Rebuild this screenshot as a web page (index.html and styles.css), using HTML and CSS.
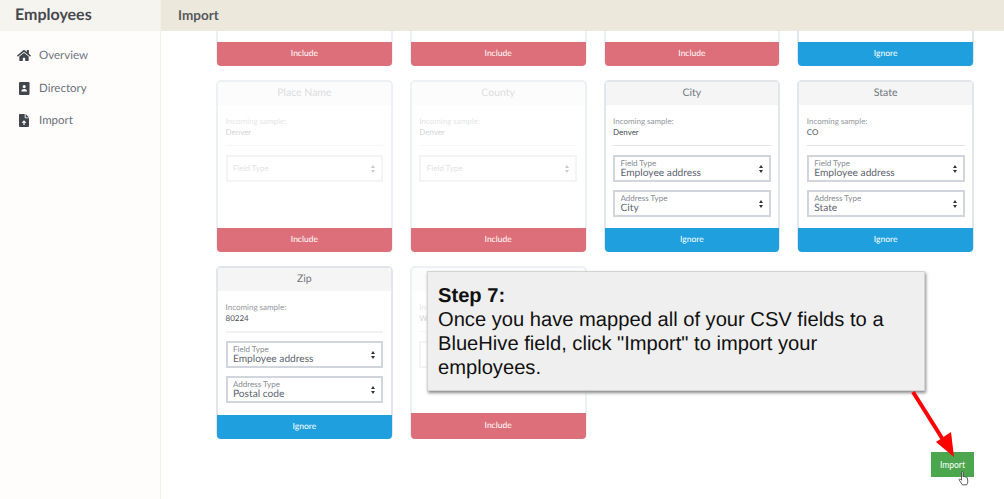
FILE: index.html
```html
<!DOCTYPE html>
<html lang="en">
<head>
<meta charset="utf-8">
<title>Import</title>
<link rel="stylesheet" href="styles.css">
</head>
<body>
<div class="app">
  <aside class="sidebar">
    <div class="brand">Employees</div>
    <nav class="nav">
      <a class="nav-item"><svg class="nav-icon" viewBox="0 0 576 512"><path d="M280.37 148.26L96 300.11V464a16 16 0 0 0 16 16l112.06-.29a16 16 0 0 0 15.92-16V368a16 16 0 0 1 16-16h64a16 16 0 0 1 16 16v95.64a16 16 0 0 0 16 16.05L464 480a16 16 0 0 0 16-16V300L295.67 148.26a12.19 12.19 0 0 0-15.3 0zM571.6 251.47L488 182.56V44.05a12 12 0 0 0-12-12h-56a12 12 0 0 0-12 12v72.61L318.47 43a48 48 0 0 0-61 0L4.34 251.47a12 12 0 0 0-1.6 16.9l25.5 31A12 12 0 0 0 45.15 301l235.22-193.74a12.19 12.19 0 0 1 15.3 0L530.9 301a12 12 0 0 0 16.9-1.6l25.5-31a12 12 0 0 0-1.7-16.93z"/></svg>Overview</a>
      <a class="nav-item"><svg class="nav-icon" viewBox="0 0 12 13"><path fill-rule="evenodd" d="M2 0h8.500a1 1 0 0 1 1 1v11a1 1 0 0 1-1 1H2a1 1 0 0 1-1-1V1a1 1 0 0 1 1-1zM6.200 3a1.600 1.600 0 1 0 0 3.200a1.600 1.600 0 0 0 0-3.200zM3.400 9.600h5.600c.2-1.500-.9-2.600-2.800-2.600s-3 1.100-2.800 2.600z"/></svg>Directory</a>
      <a class="nav-item"><svg class="nav-icon" viewBox="0 0 12 13"><path fill-rule="evenodd" d="M2 0h4.700v3.600a.7.7 0 0 0 .7.7H11V12a1 1 0 0 1-1 1H2a1 1 0 0 1-1-1V1a1 1 0 0 1 1-1zM7.600 0l3.400 3.400H7.600zM5.400 11h1.300V8.800h1.800L6 6.200 3.500 8.800h1.900z"/></svg>Import</a>
    </nav>
  </aside>
  <div class="page">
    <header class="topbar">Import</header>
    <main class="content">
      <div class="grid">
        <section class="card stub off"><div class="card-body"></div><div class="action include">Include</div></section>
        <section class="card stub off"><div class="card-body"></div><div class="action include">Include</div></section>
        <section class="card stub off"><div class="card-body"></div><div class="action include">Include</div></section>
        <section class="card stub"><div class="card-body"></div><div class="action ignore">Ignore</div></section>

        <section class="card off">
          <h3 class="card-title">Place Name</h3>
          <div class="card-body">
            <div class="sample-label">Incoming sample:</div>
            <div class="sample-value">Denver</div>
            <hr class="rule">
            <div class="select"><span class="select-label">Field Type</span><span class="arrows"></span></div>
          </div>
          <div class="action include">Include</div>
        </section>
        <section class="card off">
          <h3 class="card-title">County</h3>
          <div class="card-body">
            <div class="sample-label">Incoming sample:</div>
            <div class="sample-value">Denver</div>
            <hr class="rule">
            <div class="select"><span class="select-label">Field Type</span><span class="arrows"></span></div>
          </div>
          <div class="action include">Include</div>
        </section>
        <section class="card">
          <h3 class="card-title">City</h3>
          <div class="card-body">
            <div class="sample-label">Incoming sample:</div>
            <div class="sample-value">Denver</div>
            <hr class="rule">
            <div class="select"><span class="select-label">Field Type</span><span class="select-value">Employee address</span><span class="arrows"></span></div>
            <div class="select"><span class="select-label">Address Type</span><span class="select-value">City</span><span class="arrows"></span></div>
          </div>
          <div class="action ignore">Ignore</div>
        </section>
        <section class="card">
          <h3 class="card-title">State</h3>
          <div class="card-body">
            <div class="sample-label">Incoming sample:</div>
            <div class="sample-value">CO</div>
            <hr class="rule">
            <div class="select"><span class="select-label">Field Type</span><span class="select-value">Employee address</span><span class="arrows"></span></div>
            <div class="select"><span class="select-label">Address Type</span><span class="select-value">State</span><span class="arrows"></span></div>
          </div>
          <div class="action ignore">Ignore</div>
        </section>

        <section class="card">
          <h3 class="card-title">Zip</h3>
          <div class="card-body">
            <div class="sample-label">Incoming sample:</div>
            <div class="sample-value">80224</div>
            <hr class="rule rule-soft">
            <div class="select"><span class="select-label">Field Type</span><span class="select-value">Employee address</span><span class="arrows"></span></div>
            <div class="select"><span class="select-label">Address Type</span><span class="select-value">Postal code</span><span class="arrows"></span></div>
          </div>
          <div class="action ignore">Ignore</div>
        </section>
        <section class="card off tall">
          <div class="card-title"></div>
          <div class="card-body">
            <div class="sample-clip">In</div>
            <div class="sample-clip">W</div>
            <hr class="rule">
            <div class="select"></div>
          </div>
          <div class="action include">Include</div>
        </section>
      </div>
      <div class="footer-actions"><button class="import-btn">Import</button></div>
    </main>
  </div>
</div>

<div class="callout"><strong>Step 7:</strong><br>Once you have mapped all of your CSV fields to a BlueHive field, click "Import" to import your employees.</div>
<svg class="arrow" viewBox="0 0 60 80"><line x1="3" y1="2" x2="37" y2="56" stroke="#f00" stroke-width="4"/><polygon points="44,67 26,52 41,42" fill="#f00"/></svg>
<svg class="cursor" viewBox="0 0 12 16"><path d="M3.500 1.200c0-.9 1.500-.9 1.500 0v4.600l.6-.3c.6-.2 1 .1 1.100.4.500-.3 1.100-.1 1.300.4.500-.3 1.200-.1 1.300.5l.5 3.500c.1 1.500-.5 2.600-1.100 3.500H4.400L1.300 9.200c-.6-.8.400-1.700 1.100-1l1.100 1.100z" fill="#fff" stroke="#333" stroke-width=".8"/></svg>
</body>
</html>
```
FILE: styles.css
```css
* { box-sizing: border-box; }
html, body { height: 100%; }
body {
  margin: 0;
  overflow: hidden;
  background: #fff;
  font-family: "Lato", "Noto Sans", sans-serif;
  color: #4a4f57;
  text-rendering: geometricPrecision;
}
.app { display: flex; height: 499px; }
.sidebar {
  flex: 0 0 161px;
  background: #fefdfb;
  border-right: 1px solid #f3f1eb;
}
.brand {
  height: 31px;
  padding-left: 15px;
  background: #f6f4ee;
  font-size: 16px;
  font-weight: 700;
  line-height: 30px;
  color: #45484e;
}
.nav { display: flex; flex-direction: column; padding-top: 8.5px; }
.nav-item {
  display: flex;
  align-items: center;
  height: 32.5px;
  padding-left: 17px;
  font-size: 11.5px;
  color: #6b717b;
}
.nav-icon { width: 14px; height: 13px; margin-right: 8px; fill: #41454c; }
.page { flex: 1; min-width: 0; display: flex; flex-direction: column; }
.topbar {
  height: 31px;
  padding-left: 17px;
  background: #ece8dc;
  font-size: 13.5px;
  font-weight: 700;
  line-height: 30px;
  color: #55585c;
}
.content { flex: 1; padding: 0 30px 0 55px; }
.grid {
  display: grid;
  grid-template-columns: repeat(4, 1fr);
  grid-template-rows: 35px 172px 173px;
  column-gap: 17px;
  row-gap: 14px;
}
.card {
  display: flex;
  flex-direction: column;
  background: #fff;
  border: 2px solid #e2e6ec;
  border-radius: 5px;
}
.card.stub { border-top: 0; border-radius: 0 0 5px 5px; }
.card.off { border-color: #edf0f4; }
.card-title {
  margin: 0;
  height: 23px;
  background: #f5f5f5;
  font-size: 10.5px;
  font-weight: 400;
  line-height: 22px;
  text-align: center;
  color: #71767e;
}
.card-body { flex: 1; padding: 9px 7.5px 0; }
.sample-label { margin-top: 2px; font-size: 8px; line-height: 11px; color: #93979d; }
.sample-value { font-size: 8px; line-height: 11px; color: #4a4f57; }
.sample-clip { font-size: 8px; line-height: 11px; color: #4a4f57; }
.sample-clip:first-child { margin-top: 2px; color: #93979d; }
.rule { margin: 7px 0 9px; border: 0; border-top: 1px solid #e0e3e8; }
.rule-soft { border-top: 2px solid #eff1f3; margin-bottom: 8px; }
.select {
  position: relative;
  display: flex;
  flex-direction: column;
  justify-content: center;
  height: 27px;
  margin-bottom: 8px;
  padding: 0 0 1px 5.5px;
  border: 2px solid #d0d5de;
  color: #606570;
}
.select-label { font-size: 8px; line-height: 9px; color: #858a92; }
.select-value { font-size: 10.2px; line-height: 10px; }
.arrows {
  position: absolute;
  right: 6px;
  top: 50%;
  margin-top: -4px;
  width: 4px;
  height: 8px;
}
.arrows::before, .arrows::after {
  content: "";
  position: absolute;
  left: 0;
  border-left: 2px solid transparent;
  border-right: 2px solid transparent;
}
.arrows::before { top: 0; border-bottom: 3px solid #333; }
.arrows::after { bottom: 0; border-top: 3px solid #333; }
.off .card-title, .off .card-body { opacity: .25; }
.action {
  flex: 0 0 24px;
  margin: 0 -1px -2px;
  border-radius: 0 0 4px 4px;
  font-size: 8.5px;
  font-weight: 400;
  line-height: 23px;
  text-align: center;
  color: #fff;
}
.include { background: #dc6f79; }
.ignore { background: #209fdf; }
.tall .action { flex-basis: 26px; line-height: 25px; }
.footer-actions { display: flex; justify-content: flex-end; margin-top: 13px; }
.import-btn {
  width: 43px;
  height: 25px;
  padding: 0;
  border: 0;
  background: #4ca64e;
  font: 400 8.5px "Lato", sans-serif;
  color: #fff;
}
.callout {
  position: absolute;
  left: 427px;
  top: 271px;
  width: 498px;
  height: 120px;
  padding: 12px 10px;
  background: #efefef;
  border: 1px solid #d4d4d4;
  box-shadow: 1px 2px 3px #888;
  font: 20.15px/24px "Liberation Sans", Arial, sans-serif;
  color: #111;
}
.arrow { position: absolute; left: 910px; top: 390px; width: 60px; height: 80px; }
.cursor { position: absolute; left: 958px; top: 471px; width: 12px; height: 16px; }
```
